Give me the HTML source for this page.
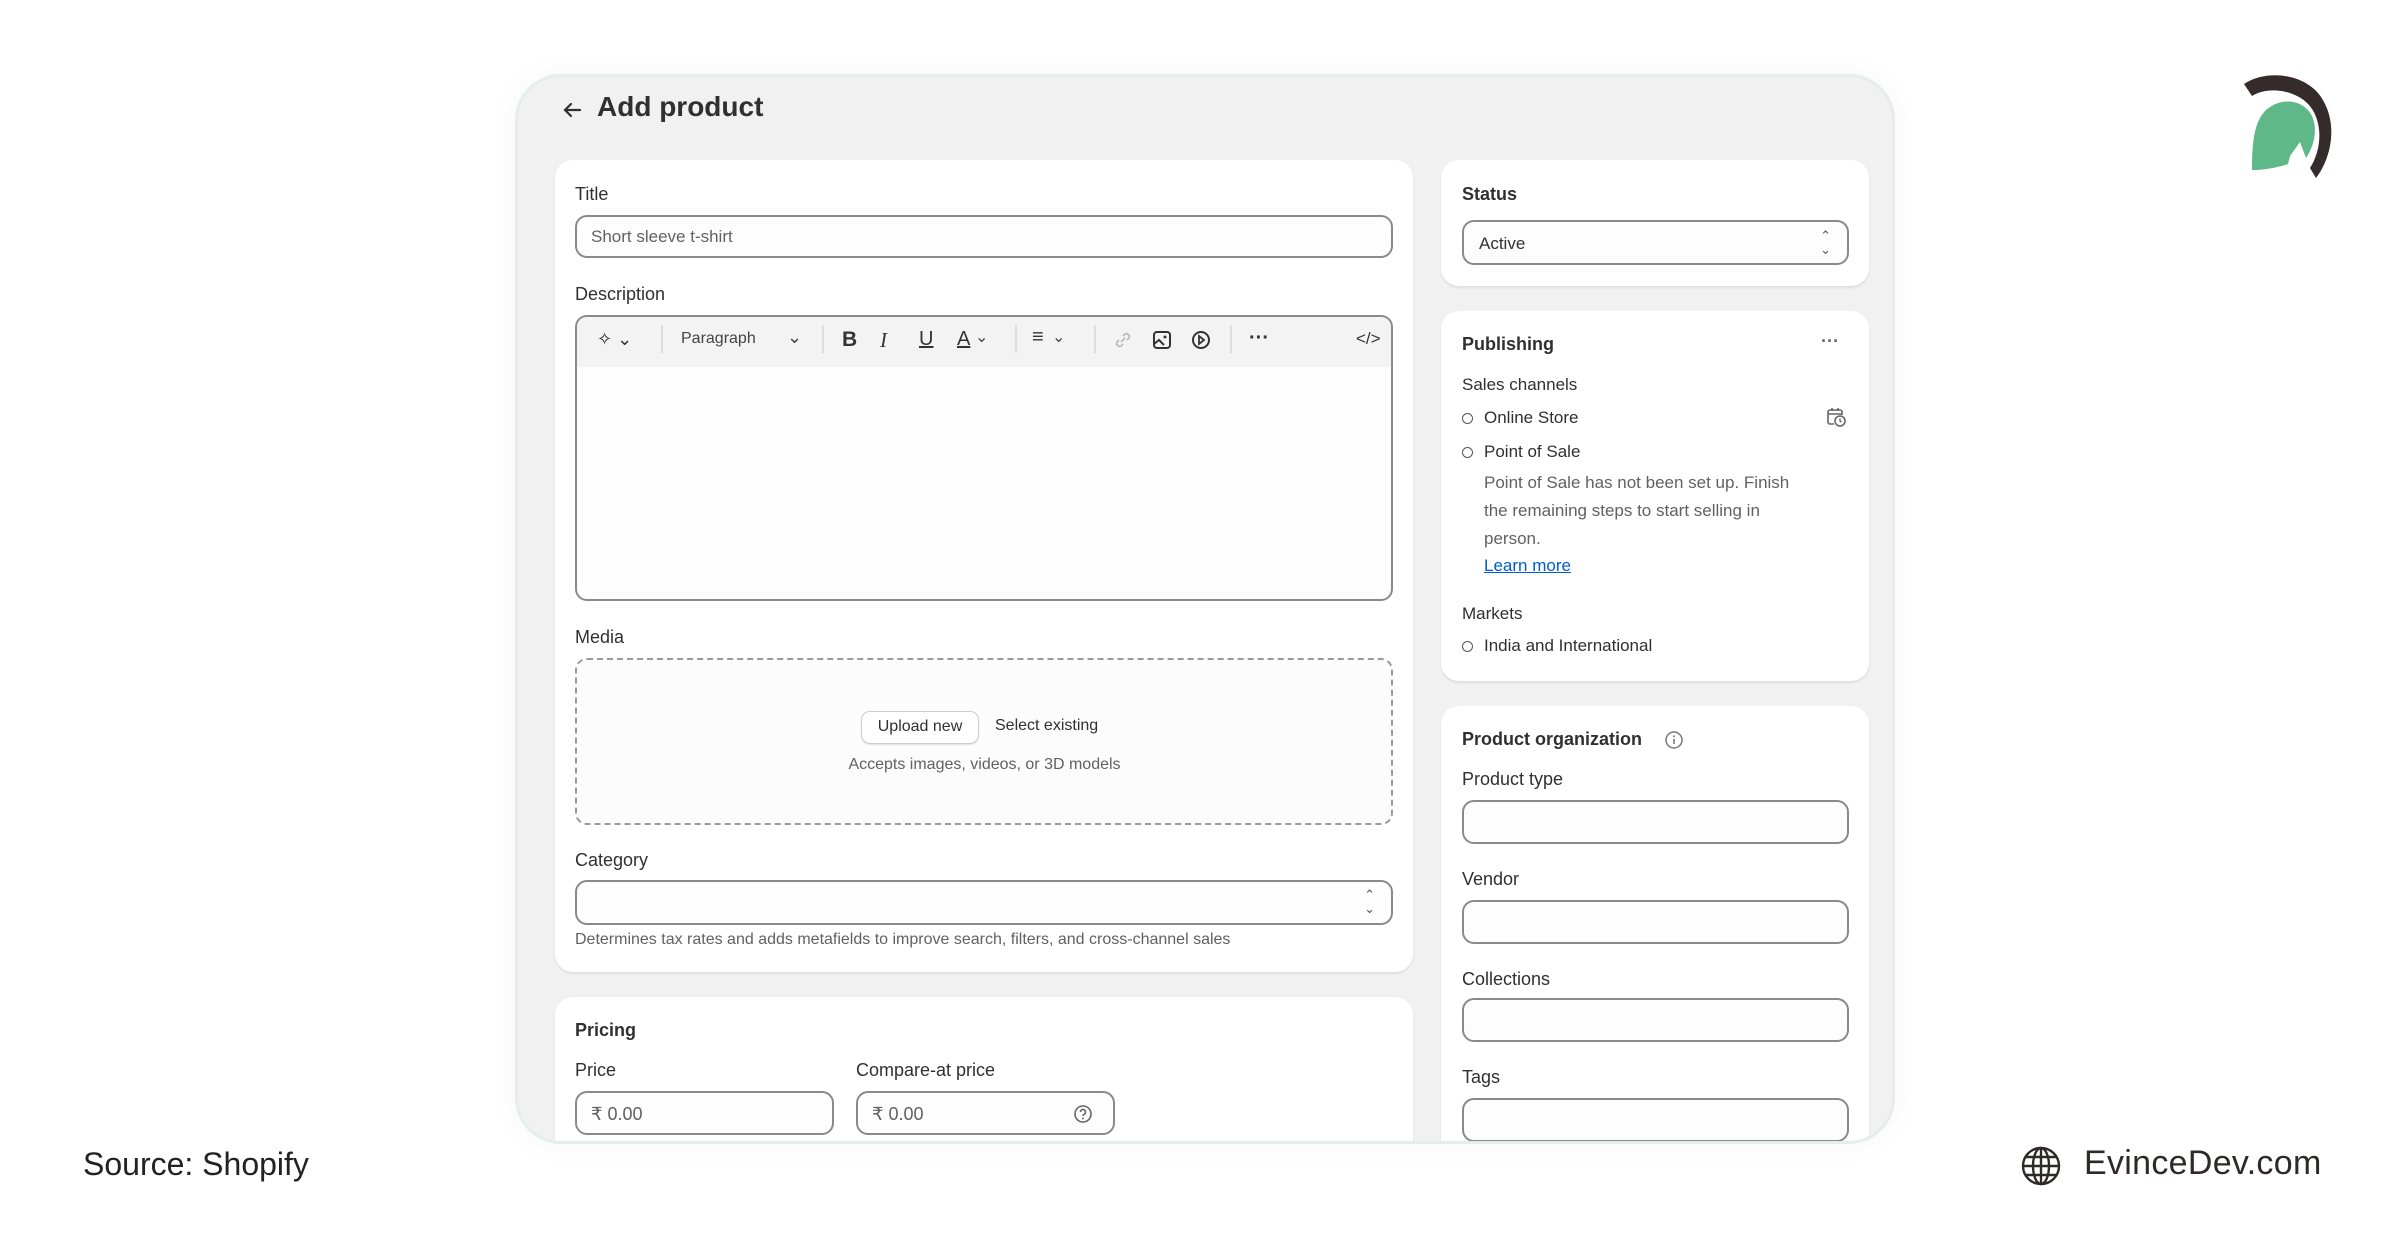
<!DOCTYPE html>
<html><head><meta charset="utf-8"><style>
*{margin:0;padding:0;box-sizing:border-box}
body{width:2400px;height:1256px;background:#fff;font-family:"Liberation Sans",sans-serif;color:#303030;position:relative;overflow:hidden}
.a{position:absolute;white-space:nowrap}
.frame{position:absolute;left:515px;top:74px;width:1380px;height:1070px;background:#f1f1f1;border:3px solid #e3efe8;border-radius:46px;overflow:hidden;box-shadow:0 0 30px rgba(0,0,0,.04)}
.card{position:absolute;background:#fff;border-radius:18px;box-shadow:0 2px 2px rgba(0,0,0,.08)}
.lbl{font-size:18px;color:#303030}
.b{font-weight:bold}
.inp{position:absolute;border:2px solid #8a8a8a;border-radius:12px;background:#fdfdfd}
.mut{color:#616161}
</style></head><body>
<div class="frame">
 <svg class="a" style="left:42px;top:21px" width="24" height="24" viewBox="0 0 24 24"><path d="M20 12H5M11 6l-6 6 6 6" stroke="#303030" stroke-width="2.2" fill="none" stroke-linecap="round"/></svg>
 <div class="a b" style="left:79px;top:14px;font-size:28px;color:#303030">Add product</div>

 <div class="card" style="left:37px;top:83px;width:858px;height:812px">
  <div class="a lbl" style="left:20px;top:24px">Title</div>
  <div class="inp" style="left:20px;top:55px;width:818px;height:43px"><span class="a" style="left:14px;top:10px;font-size:17px;color:#616161">Short sleeve t-shirt</span></div>
  <div class="a lbl" style="left:20px;top:124px">Description</div>
  <div class="inp" style="left:20px;top:155px;width:818px;height:286px;overflow:hidden">
   <div style="height:50px;background:#f3f3f3"></div>
   <div class="a" style="left:20px;top:12px;font-size:18px;color:#303030">✧ ⌄</div>
   <div class="a" style="left:84px;top:8px;width:2px;height:28px;background:#ddd"></div>
   <div class="a" style="left:104px;top:13px;font-size:16px;color:#444">Paragraph</div>
   <div class="a" style="left:210px;top:10px;font-size:18px;color:#444">⌄</div>
   <div class="a" style="left:245px;top:8px;width:2px;height:28px;background:#ddd"></div>
   <div class="a b" style="left:265px;top:11px;font-size:21px;color:#333">B</div>
   <div class="a" style="left:303px;top:11px;font-size:21px;font-style:italic;font-family:'Liberation Serif',serif;color:#333">I</div>
   <div class="a" style="left:342px;top:11px;font-size:20px;text-decoration:underline;color:#333">U</div>
   <div class="a" style="left:380px;top:11px;font-size:20px;text-decoration:underline;color:#333">A</div>
   <div class="a" style="left:398px;top:10px;font-size:16px;color:#444">⌄</div>
   <div class="a" style="left:438px;top:8px;width:2px;height:28px;background:#ddd"></div>
   <div class="a" style="left:455px;top:9px;font-size:20px;color:#333">≡</div>
   <div class="a" style="left:475px;top:10px;font-size:16px;color:#444">⌄</div>
   <div class="a" style="left:517px;top:8px;width:2px;height:28px;background:#ddd"></div>
   <svg class="a" style="left:535px;top:12px" width="22" height="22" viewBox="0 0 22 22"><path d="M9 13l4-4M7 11l-2 2a3 3 0 004 4l2-2M15 11l2-2a3 3 0 00-4-4l-2 2" stroke="#bbb" stroke-width="1.8" fill="none"/></svg>
   <svg class="a" style="left:574px;top:12px" width="22" height="22" viewBox="0 0 22 22"><rect x="3" y="3" width="16" height="16" rx="3" stroke="#333" stroke-width="2" fill="none"/><circle cx="14" cy="8" r="1.5" fill="#333"/><path d="M3 15l5-4 5 5" stroke="#333" stroke-width="2" fill="none"/></svg>
   <svg class="a" style="left:613px;top:12px" width="22" height="22" viewBox="0 0 22 22"><circle cx="11" cy="11" r="8" stroke="#333" stroke-width="2" fill="none"/><path d="M9 7l5 4-5 4z" stroke="#333" stroke-width="1.8" fill="none"/></svg>
   <div class="a" style="left:653px;top:8px;width:2px;height:28px;background:#ddd"></div>
   <div class="a b" style="left:672px;top:10px;font-size:20px;color:#333">···</div>
   <div class="a" style="left:779px;top:12px;font-size:17px;color:#333">&lt;/&gt;</div>
  </div>
  <div class="a lbl" style="left:20px;top:467px">Media</div>
  <div class="a" style="left:20px;top:498px;width:818px;height:167px;border:2px dashed #9a9a9a;border-radius:12px;background:#fcfcfc">
   <div class="a" style="left:284px;top:51px;width:118px;height:33px;border:1.5px solid #ccc;border-radius:9px;background:#fff;box-shadow:0 1px 1px rgba(0,0,0,.1);font-size:16px;text-align:center;line-height:30px;color:#303030">Upload new</div>
   <div class="a" style="left:418px;top:57px;font-size:16px;color:#303030">Select existing</div>
   <div class="a mut" style="left:0;width:815px;text-align:center;top:96px;font-size:16px">Accepts images, videos, or 3D models</div>
  </div>
  <div class="a lbl" style="left:20px;top:690px">Category</div>
  <div class="inp" style="left:20px;top:720px;width:818px;height:45px"><span class="a" style="right:16px;top:6px;font-size:13px;line-height:14px;color:#555;text-align:center">⌃<br>⌄</span></div>
  <div class="a mut" style="left:20px;top:771px;font-size:16px">Determines tax rates and adds metafields to improve search, filters, and cross-channel sales</div>
 </div>

 <div class="card" style="left:37px;top:920px;width:858px;height:300px">
  <div class="a lbl b" style="left:20px;top:23px">Pricing</div>
  <div class="a lbl" style="left:20px;top:63px">Price</div>
  <div class="a lbl" style="left:301px;top:63px">Compare-at price</div>
  <div class="inp" style="left:20px;top:94px;width:259px;height:44px"><span class="a mut" style="left:14px;top:11px;font-size:18px">₹ 0.00</span></div>
  <div class="inp" style="left:301px;top:94px;width:259px;height:44px"><span class="a mut" style="left:14px;top:11px;font-size:18px">₹ 0.00</span>
   <svg class="a" style="left:215px;top:11px" width="20" height="20" viewBox="0 0 20 20"><circle cx="10" cy="10" r="8" stroke="#666" stroke-width="1.6" fill="none"/><path d="M7.5 8a2.5 2.5 0 114 2c-1 .6-1.5 1-1.5 2" stroke="#666" stroke-width="1.6" fill="none"/><circle cx="10" cy="14.5" r="1" fill="#666"/></svg></div>
 </div>

 <div class="card" style="left:923px;top:83px;width:428px;height:126px">
  <div class="a lbl b" style="left:21px;top:24px">Status</div>
  <div class="inp" style="left:21px;top:60px;width:387px;height:45px"><span class="a" style="left:15px;top:12px;font-size:17px">Active</span><span class="a" style="right:16px;top:7px;font-size:13px;line-height:14px;color:#555">⌃<br>⌄</span></div>
 </div>

 <div class="card" style="left:923px;top:234px;width:428px;height:370px">
  <div class="a lbl b" style="left:21px;top:23px">Publishing</div>
  <div class="a b" style="left:380px;top:20px;font-size:18px;color:#666">···</div>
  <div class="a lbl" style="left:21px;top:64px;font-size:17px">Sales channels</div>
  <div class="a" style="left:21px;top:102px;width:11px;height:11px;border:1.5px solid #555;border-radius:50%"></div>
  <div class="a" style="left:43px;top:97px;font-size:17px">Online Store</div>
  <svg class="a" style="left:383px;top:94px" width="24" height="24" viewBox="0 0 24 24"><path d="M10 19H6a2 2 0 01-2-2V7a2 2 0 012-2h10a2 2 0 012 2v3M4 9h14M8 3v3M14 3v3" stroke="#666" stroke-width="1.6" fill="none"/><circle cx="16" cy="16" r="5" stroke="#666" stroke-width="1.6" fill="none"/><path d="M16 13.5V16l1.5 1" stroke="#666" stroke-width="1.4" fill="none"/></svg>
  <div class="a" style="left:21px;top:136px;width:11px;height:11px;border:1.5px solid #555;border-radius:50%"></div>
  <div class="a" style="left:43px;top:131px;font-size:17px">Point of Sale</div>
  <div class="a mut" style="left:43px;top:158px;font-size:17px;line-height:28px">Point of Sale has not been set up. Finish<br>the remaining steps to start selling in<br>person.</div>
  <div class="a" style="left:43px;top:245px;font-size:17px;color:#005bd3;text-decoration:underline">Learn more</div>
  <div class="a lbl" style="left:21px;top:293px;font-size:17px">Markets</div>
  <div class="a" style="left:21px;top:330px;width:11px;height:11px;border:1.5px solid #555;border-radius:50%"></div>
  <div class="a" style="left:43px;top:325px;font-size:17px">India and International</div>
 </div>

 <div class="card" style="left:923px;top:629px;width:428px;height:500px">
  <div class="a lbl b" style="left:21px;top:23px">Product organization</div>
  <svg class="a" style="left:223px;top:24px" width="20" height="20" viewBox="0 0 20 20"><circle cx="10" cy="10" r="8" stroke="#777" stroke-width="1.5" fill="none"/><path d="M10 9v5" stroke="#777" stroke-width="1.6"/><circle cx="10" cy="6.3" r="1" fill="#777"/></svg>
  <div class="a lbl" style="left:21px;top:63px">Product type</div>
  <div class="inp" style="left:21px;top:94px;width:387px;height:44px"></div>
  <div class="a lbl" style="left:21px;top:163px">Vendor</div>
  <div class="inp" style="left:21px;top:194px;width:387px;height:44px"></div>
  <div class="a lbl" style="left:21px;top:263px">Collections</div>
  <div class="inp" style="left:21px;top:292px;width:387px;height:44px"></div>
  <div class="a lbl" style="left:21px;top:361px">Tags</div>
  <div class="inp" style="left:21px;top:392px;width:387px;height:44px"></div>
 </div>
</div>

<svg class="a" style="left:2238px;top:72px" width="104" height="110" viewBox="0 0 104 110">
 <path d="M6 12 C30 -4 72 2 86 30 C100 56 92 88 78 106 L72 96 C86 74 84 44 68 30 C54 18 30 14 14 24 Z" fill="#352b2a"/>
 <path d="M14 98 C14 70 16 50 28 38 C44 24 66 28 74 44 C80 58 76 74 68 86 L62 70 L52 84 L50 92 C38 96 24 98 14 98 Z M20 56 L30 52 L28 62 Z" fill="#5fb887"/>
</svg>

<div class="a" style="left:83px;top:1146px;font-size:32px;color:#222">Source: Shopify</div>
<svg class="a" style="left:2020px;top:1145px" width="42" height="42" viewBox="0 0 42 42"><g stroke="#2e2a29" stroke-width="2.4" fill="none"><circle cx="21" cy="21" r="18"/><ellipse cx="21" cy="21" rx="8" ry="18"/><path d="M21 3v36M3 21h36M6 12h30M6 30h30"/></g></svg>
<div class="a" style="left:2084px;top:1144px;font-size:34px;color:#2e2a29;letter-spacing:.3px">EvinceDev.com</div>
</body></html>
